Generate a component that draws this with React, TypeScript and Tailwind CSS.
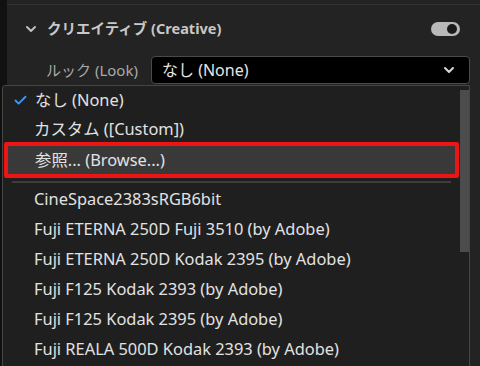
import { Check, ChevronDown } from "lucide-react";

const LOOKS = [
  "CineSpace2383sRGB6bit",
  "Fuji ETERNA 250D Fuji 3510 (by Adobe)",
  "Fuji ETERNA 250D Kodak 2395 (by Adobe)",
  "Fuji F125 Kodak 2393 (by Adobe)",
  "Fuji F125 Kodak 2395 (by Adobe)",
  "Fuji REALA 500D Kodak 2393 (by Adobe)",
];

const font = "font-['Noto_Sans','Noto_Sans_CJK_JP',sans-serif]";

export default function App() {
  return (
    <div className={`relative flex h-[366px] w-[480px] overflow-hidden bg-[#151515] ${font}`}>
      <div className="w-[7px] shrink-0 bg-[#111]" />
      {/* Lumetri panel */}
      <div className="flex flex-1 flex-col bg-[#232323]">
        <div className="mt-[4px] h-px bg-[#333]" />
        <div className="flex h-[46px] items-center pl-[16px] pr-[20px] pt-[1px]">
          <ChevronDown className="h-4 w-4 text-[#bdbdbd]" strokeWidth={3} />
          <span className="ml-[8px] text-[14.5px] font-bold text-[#c8c8c8]">クリエイティブ (Creative)</span>
          <div className="ml-auto flex h-[14px] w-[29px] items-center justify-end rounded-full bg-[#b9b9b9] px-[3px]">
            <div className="h-[10px] w-[10px] rounded-full bg-[#1b1b1b]" />
          </div>
        </div>
        <div className="mt-[5px] flex items-center pl-[39px] pr-[10px]">
          <span className="w-[105px] text-[15px] text-[#a9a9a9]">ルック (Look)</span>
          <div className="flex h-[28px] flex-1 items-center rounded-[4px] border border-[#4a4a4a] bg-black pl-[10px] pr-[12px]">
            <span className="text-[16px] text-[#e6e6e6]">なし (None)</span>
            <ChevronDown className="ml-auto h-[16px] w-[16px] text-[#d8d8d8]" strokeWidth={3} />
          </div>
        </div>
      </div>

      {/* Look dropdown */}
      <div className="absolute left-[2px] top-[85px] h-[300px] w-[468px] rounded-tl-[3px] border border-[#464646] bg-[#1f1f1f] text-[16.4px] text-[#e2e2e2]">
        <div className="flex">
          <div className="flex-1">
            <div className="flex h-[29px] items-center pl-[10px]">
              <Check className="h-[15px] w-[15px] text-[#3f95f2]" strokeWidth={3} />
              <span className="ml-[7px]">なし (None)</span>
            </div>
            <div className="flex h-[27px] items-center pl-[31px] pt-[1px]">カスタム ([Custom])</div>
            <div className="ml-[1px] mr-[1px] flex h-[36px] items-center rounded-[2px] border-[4px] border-[#ee1414] bg-[#393939] pl-[27px]">
              参照... (Browse...)
            </div>
            <div className="mx-[9px] mt-[3px] h-[2px] bg-[#3d3d3d]" />
            <div className="pt-[1px]">
              {LOOKS.map((l) => (
                <div key={l} className="flex h-[30px] items-center pl-[31px]">
                  {l}
                </div>
              ))}
            </div>
          </div>
          <div className="mt-[4px] h-[162px] w-[9px] shrink-0 bg-[#4c4c4c]" />
        </div>
      </div>
    </div>
  );
}
